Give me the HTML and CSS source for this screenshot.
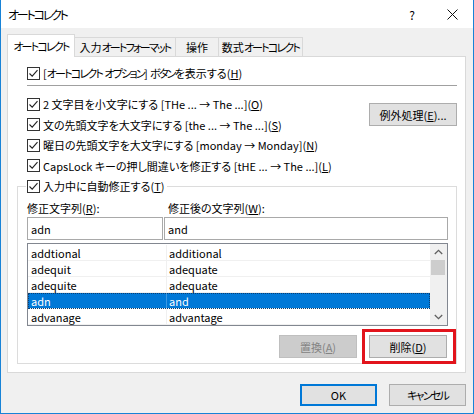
FILE: index.html
```html
<!DOCTYPE html>
<html lang="ja">
<head>
<meta charset="utf-8">
<title>オートコレクト</title>
<link rel="stylesheet" href="styles.css">
</head>
<body>
<div class="window">
  <div class="titlebar">
    <span class="title"><span class="k">オートコレクト</span></span>
    <span class="help">?</span>
    <span class="close"><svg width="11" height="11" viewBox="0 0 11 11"><path d="M0.5 0.5 L10.5 10.5 M10.5 0.5 L0.5 10.5" stroke="#111" stroke-width="1" fill="none"/></svg></span>
  </div>
  <div class="client">
    <div class="tabs">
      <div class="tab active"><span class="k">オートコレクト</span></div>
      <div class="tab t2">入力<span class="k">オートフォーマット</span></div>
      <div class="tab t3">操作</div>
      <div class="tab t4">数式<span class="k">オートコレクト</span></div>
    </div>
    <div class="panel">
      <div class="check-row first">
        <span class="cb"><svg width="13" height="13" viewBox="0 0 13 13"><rect x="0.5" y="0.5" width="12" height="12" fill="#fff" stroke="#333"/><path d="M2.5 6.5 L5.2 9.2 L10.5 3.2" stroke="#222" stroke-width="1.1" fill="none"/></svg></span>
        <span>[<span class="k">オートコレクト</span> <span class="k">オプション</span>] <span class="k">ボタン</span>を表示する(<u>H</u>)</span>
      </div>
      <div class="sep"></div>
      <div class="opts">
        <div class="opt-rows">
          <div class="check-row">
            <span class="cb"><svg width="13" height="13" viewBox="0 0 13 13"><rect x="0.5" y="0.5" width="12" height="12" fill="#fff" stroke="#333"/><path d="M2.5 6.5 L5.2 9.2 L10.5 3.2" stroke="#222" stroke-width="1.1" fill="none"/></svg></span>
            <span>2 文字目を小文字にする [THe ... → The ...](<u>O</u>)</span>
          </div>
          <div class="check-row">
            <span class="cb"><svg width="13" height="13" viewBox="0 0 13 13"><rect x="0.5" y="0.5" width="12" height="12" fill="#fff" stroke="#333"/><path d="M2.5 6.5 L5.2 9.2 L10.5 3.2" stroke="#222" stroke-width="1.1" fill="none"/></svg></span>
            <span>文の先頭文字を大文字にする [the ... → The ...](<u>S</u>)</span>
          </div>
          <div class="check-row">
            <span class="cb"><svg width="13" height="13" viewBox="0 0 13 13"><rect x="0.5" y="0.5" width="12" height="12" fill="#fff" stroke="#333"/><path d="M2.5 6.5 L5.2 9.2 L10.5 3.2" stroke="#222" stroke-width="1.1" fill="none"/></svg></span>
            <span>曜日の先頭文字を大文字にする [monday → Monday](<u>N</u>)</span>
          </div>
          <div class="check-row">
            <span class="cb"><svg width="13" height="13" viewBox="0 0 13 13"><rect x="0.5" y="0.5" width="12" height="12" fill="#fff" stroke="#333"/><path d="M2.5 6.5 L5.2 9.2 L10.5 3.2" stroke="#222" stroke-width="1.1" fill="none"/></svg></span>
            <span>CapsLock キーの押し間違いを修正する [tHE ... → The ...](<u>L</u>)</span>
          </div>
        </div>
        <div class="btn except">例外処理(<u>E</u>)...</div>
      </div>
      <div class="group">
        <div class="check-row legend">
          <span class="cb"><svg width="13" height="13" viewBox="0 0 13 13"><rect x="0.5" y="0.5" width="12" height="12" fill="#fff" stroke="#333"/><path d="M2.5 6.5 L5.2 9.2 L10.5 3.2" stroke="#222" stroke-width="1.1" fill="none"/></svg></span>
          <span>入力中に自動修正する(<u>T</u>)</span>
        </div>
        <div class="labels">
          <span class="lab1">修正文字列(<u>R</u>):</span>
          <span class="lab2">修正後の文字列(<u>W</u>):</span>
        </div>
        <div class="inputs">
          <div class="input in1">adn</div>
          <div class="input in2">and</div>
        </div>
        <div class="list">
          <div class="rows">
            <div class="lrow"><span class="c1">addtional</span><span class="c2">additional</span></div>
            <div class="lrow"><span class="c1">adequit</span><span class="c2">adequate</span></div>
            <div class="lrow"><span class="c1">adequite</span><span class="c2">adequate</span></div>
            <div class="lrow selected"><span class="c1">adn</span><span class="c2">and</span></div>
            <div class="lrow"><span class="c1">advanage</span><span class="c2">advantage</span></div>
          </div>
          <div class="scrollbar">
            <span class="arrow"><svg width="9" height="6" viewBox="0 0 9 6"><path d="M0.8 5 L4.5 1.3 L8.2 5" stroke="#606060" stroke-width="1.3" fill="none"/></svg></span>
            <span class="thumb"></span>
            <span class="track"></span>
            <span class="arrow"><svg width="9" height="6" viewBox="0 0 9 6"><path d="M0.8 1 L4.5 4.7 L8.2 1" stroke="#606060" stroke-width="1.3" fill="none"/></svg></span>
          </div>
        </div>
        <div class="gbtns">
          <div class="btn disabled">置換(<u>A</u>)</div>
          <div class="btn del">削除(<u>D</u>)<span class="highlight"></span></div>
        </div>
      </div>
    </div>
    <div class="footer">
      <div class="btn ok">OK</div>
      <div class="btn cancel"><span class="k">キャンセル</span></div>
    </div>
  </div>
</div>
</body>
</html>
```

FILE: styles.css
```css
* { box-sizing: border-box; }
html, body { margin: 0; padding: 0; }
body {
  width: 474px;
  height: 414px;
  overflow: hidden;
  background: #fff;
  font-family: "Noto Sans CJK JP", sans-serif;
  font-size: 11px;
  font-feature-settings: "palt";
  color: #000;
}
u { text-underline-offset: 1px; }
.k { letter-spacing: -1.8px; }

.window {
  width: 474px;
  height: 414px;
  border: 1px solid #1883d7;
  border-top: none;
  display: flex;
  flex-direction: column;
  background: #f0f0f0;
}

.titlebar {
  height: 28px;
  flex: none;
  background: #fff;
  display: flex;
  align-items: center;
  padding-left: 7px;
}
.title { flex: 1; font-size: 12px; }
.title .k { letter-spacing: -2.2px; }
.help { font-size: 12px; margin-right: 32px; }
.close { width: 11px; height: 11px; margin-right: 15px; display: flex; }

.client {
  flex: 1;
  padding: 6px 0 0 6px;
  display: flex;
  flex-direction: column;
}

.tabs {
  height: 22px;
  display: flex;
  align-items: flex-end;
}
.tab {
  height: 19px;
  border: 1px solid #d9d9d9;
  border-bottom: none;
  background: #f0f0f0;
  display: flex;
  align-items: center;
  justify-content: center;
  margin-left: -1px;
  white-space: nowrap;
}
.tab.active {
  position: relative;
  z-index: 1;
  margin-left: 0;
  height: 23px;
  margin-bottom: -1px;
  width: 68px;
  background: #fff;
}
.t2 { width: 102px; }
.t3 { width: 44px; }
.t4 { width: 85px; }

.panel {
  width: 459px;
  height: 317px;
  border: 1px solid #d9d9d9;
  background: #fff;
  display: flex;
  flex-direction: column;
}

.check-row {
  display: flex;
  align-items: center;
  gap: 3px;
  height: 20.5px;
  white-space: nowrap;
}
.cb { width: 13px; height: 13px; display: flex; flex: none; }

.first { margin-top: 6px; height: 20px; padding-left: 19px; }
.sep {
  height: 1px;
  background: #a0a0a0;
  margin: 2px 8px 0 19px;
}
.opts {
  margin-top: 8px;
  display: flex;
  justify-content: space-between;
  padding: 0 8px 0 19px;
}
.btn {
  display: flex;
  align-items: center;
  justify-content: center;
  border: 1px solid #adadad;
  background: #e1e1e1;
  height: 23px;
  width: 78px;
  white-space: nowrap;
}
.except { width: 88px; margin-top: 9px; }

.group {
  margin: 10px 8px 0 9px;
  width: 440px;
  height: 178px;
  border: 1px solid #dcdcdc;
  padding: 0 8px 5px 9px;
  display: flex;
  flex-direction: column;
}
.legend {
  margin-top: -11px;
  height: 20px;
  align-self: flex-start;
  background: #fff;
  padding: 0 3px 0 1px;
  margin-left: -1px;
}
.labels {
  margin-top: 4px;
  height: 16px;
  display: flex;
  align-items: center;
}
.lab1 { width: 141px; }
.inputs {
  margin-top: 1px;
  display: flex;
  gap: 1px;
}
.input {
  height: 23px;
  border: 1px solid #a9a9a9;
  background: #fff;
  display: flex;
  align-items: center;
  padding-left: 3px;
}
.in1 { width: 136px; }
.in2 { width: 284px; }

.list {
  margin-top: 3px;
  height: 83px;
  border: 1px solid #828790;
  display: flex;
}
.rows {
  width: 402px;
  padding-top: 1px;
  overflow: hidden;
}
.lrow {
  height: 16px;
  display: flex;
  border-bottom: 1px solid #f0f0f0;
}
.c1 {
  width: 139px;
  border-right: 1px solid #f0f0f0;
  padding-left: 3px;
  display: flex;
  align-items: center;
}
.c2 {
  flex: 1;
  padding-left: 2px;
  display: flex;
  align-items: center;
}
.lrow.selected {
  background: #0078d7;
  color: #fff;
  outline: 1px dotted #0a3f73;
  outline-offset: -1px;
}
.lrow.selected .c1 { border-right-color: #3b98e2; }

.scrollbar {
  width: 17px;
  background: #f0f0f0;
  display: flex;
  flex-direction: column;
}
.arrow {
  height: 16px;
  display: flex;
  align-items: center;
  justify-content: center;
  flex: none;
}
.thumb {
  height: 15px;
  margin: 0 2px 0 1px;
  background: #cdcdcd;
  flex: none;
}
.track { flex: 1; }

.gbtns {
  margin-top: 9px;
  display: flex;
  justify-content: flex-end;
  gap: 12px;
  padding-right: 1px;
}
.disabled {
  background: #cccccc;
  border-color: #bfbfbf;
  color: #838383;
}
.del { position: relative; }
.highlight {
  position: absolute;
  left: -8px;
  top: -7px;
  width: 94px;
  height: 35px;
  border: 3px solid #e2141c;
}

.footer {
  width: 459px;
  margin-top: 11px;
  display: flex;
  justify-content: flex-end;
  gap: 12px;
}
.footer .btn { width: 77px; height: 22px; }
.ok {
  border-color: #0078d7;
  box-shadow: inset 0 0 0 1px #0078d7;
}
```
